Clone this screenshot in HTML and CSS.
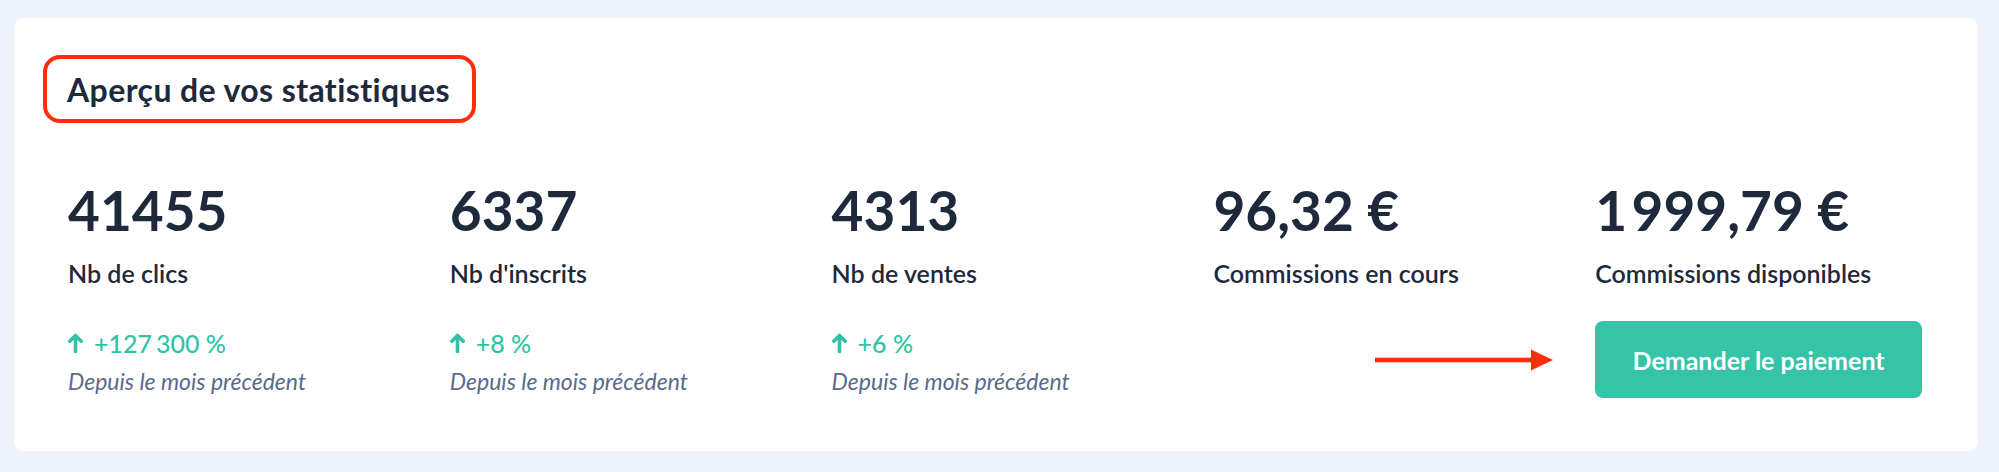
FILE: index.html
```html
<!DOCTYPE html>
<html lang="fr">
<head>
<meta charset="utf-8">
<title>Aperçu de vos statistiques</title>
<link rel="stylesheet" href="styles.css">
</head>
<body>
<main class="page">
  <section class="card">
    <header class="card-head">
      <h2 class="title">Aperçu de vos statistiques</h2>
    </header>
    <div class="stats">
      <div class="stat">
        <div class="value">41455</div>
        <div class="label">Nb de clics</div>
        <div class="trend">
          <svg class="up" viewBox="0 0 15 20" width="15" height="20"><path d="M7.5 18.5V2.5M1.8 8.2L7.5 2.5 13.2 8.2" fill="none" stroke="currentColor" stroke-width="3.6" stroke-linecap="round" stroke-linejoin="round"/></svg>
          <span>+127<span class="thin wide"></span>300 %</span>
        </div>
        <div class="since">Depuis le mois précédent</div>
      </div>
      <div class="stat">
        <div class="value">6337</div>
        <div class="label">Nb d'inscrits</div>
        <div class="trend">
          <svg class="up" viewBox="0 0 15 20" width="15" height="20"><path d="M7.5 18.5V2.5M1.8 8.2L7.5 2.5 13.2 8.2" fill="none" stroke="currentColor" stroke-width="3.6" stroke-linecap="round" stroke-linejoin="round"/></svg>
          <span>+8 %</span>
        </div>
        <div class="since">Depuis le mois précédent</div>
      </div>
      <div class="stat">
        <div class="value">4313</div>
        <div class="label">Nb de ventes</div>
        <div class="trend">
          <svg class="up" viewBox="0 0 15 20" width="15" height="20"><path d="M7.5 18.5V2.5M1.8 8.2L7.5 2.5 13.2 8.2" fill="none" stroke="currentColor" stroke-width="3.6" stroke-linecap="round" stroke-linejoin="round"/></svg>
          <span>+6 %</span>
        </div>
        <div class="since">Depuis le mois précédent</div>
      </div>
      <div class="stat">
        <div class="value">96,32 €</div>
        <div class="label">Commissions en cours</div>
      </div>
      <div class="stat">
        <div class="value">1<span class="thin"></span>999,79 €</div>
        <div class="label">Commissions disponibles</div>
        <div class="action">
          <svg class="pointer" viewBox="0 0 178 22" width="178" height="22"><rect x="0" y="8.7" width="158" height="4.6" fill="#ff2d0a"/><path d="M156 0.5L178 11L156 21.5Z" fill="#ff2d0a"/></svg>
          <button class="pay" type="button">Demander le paiement</button>
        </div>
      </div>
    </div>
  </section>
</main>
</body>
</html>
```
FILE: styles.css
```css
* { box-sizing: border-box; }
html, body { margin: 0; padding: 0; }
body {
  background: #eef3fb;
  font-family: "Lato", "Noto Sans", "Liberation Sans", sans-serif;
  color: #1e293b;
}
.page {
  padding: 18px 21px 22px 14px;
}
.card {
  background: #ffffff;
  border-radius: 10px;
  padding: 37px 56px 53px 54px;
}
.card-head {
  display: flex;
}
.title {
  margin: 0 0 0 -25px;
  border: 4px solid #ff2d0a;
  border-radius: 17px;
  padding: 0 22px 0 20px;
  height: 68px;
  display: flex;
  align-items: center;
  font-size: 32px;
  font-weight: 700;
  color: #1e293b;
  letter-spacing: 0.4px;
}
.stats {
  display: grid;
  grid-template-columns: repeat(5, 1fr);
  column-gap: 55px;
  margin-top: 59px;
}
.stat {
  display: flex;
  flex-direction: column;
  align-items: flex-start;
}
.value {
  font-size: 55px;
  line-height: 56px;
  font-weight: 700;
  color: #1e293b;
  white-space: nowrap;
}
.thin {
  display: inline-block;
  width: 0.08em;
}
.thin.wide {
  width: 0.16em;
}
.label {
  margin-top: 20px;
  font-size: 25px;
  line-height: 30px;
  font-weight: 600;
  color: #1e293b;
  white-space: nowrap;
}
.trend {
  margin-top: 40px;
  display: flex;
  align-items: center;
  gap: 11px;
  font-size: 25px;
  line-height: 30px;
  font-weight: 500;
  color: #30c3a3;
}
.up { display: block; }
.since {
  margin-top: 9px;
  font-size: 23px;
  line-height: 28px;
  font-style: italic;
  color: #5b6a8b;
  white-space: nowrap;
}
.action {
  position: relative;
  margin-top: 33px;
  width: 100%;
}
.pointer {
  position: absolute;
  right: calc(100% + 42px);
  top: 50%;
  margin-top: -11px;
}
.pay {
  display: block;
  width: 100%;
  height: 77px;
  border: 0;
  border-radius: 8px;
  background: #36c4a9;
  color: #ffffff;
  font-family: inherit;
  font-size: 25px;
  font-weight: 700;
  cursor: pointer;
}
```
